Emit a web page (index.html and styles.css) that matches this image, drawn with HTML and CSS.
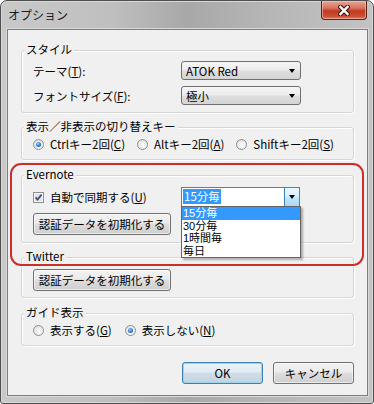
FILE: index.html
```html
<!DOCTYPE html>
<html lang="ja">
  <head>
    <meta charset="UTF-8" />
    <title>オプション</title>
    <link rel="stylesheet" href="styles.css">
  </head>
  <body>
    <div class="window">
      <div class="titlebar">
        <span class="title">オプション</span>
        <span class="close">
          <svg width="12" height="11" viewBox="0 0 12 11">
            <path d="M2.5 2 L9.5 9 M9.5 2 L2.5 9" stroke="#4a1c12" stroke-width="4.6" stroke-linecap="square" fill="none"/>
            <path d="M2.5 2 L9.5 9 M9.5 2 L2.5 9" stroke="#fff" stroke-width="2.4" stroke-linecap="square" fill="none"/>
          </svg>
        </span>
      </div>

      <div class="client">
        <div class="group g-style">
          <div class="group-title">スタイル</div>
          <div class="row">
            <span class="label">テーマ(<u>T</u>):</span>
            <span class="select">ATOK Red<i class="arrow"></i></span>
          </div>
          <div class="row second">
            <span class="label">フォントサイズ(<u>F</u>):</span>
            <span class="select">極小<i class="arrow"></i></span>
          </div>
        </div>

        <div class="group g-keys">
          <div class="group-title">表示／非表示の切り替えキー</div>
          <div class="radios">
            <span class="opt"><i class="radio on"></i>Ctrlキー2回(<u>C</u>)</span>
            <span class="opt"><i class="radio"></i>Altキー2回(<u>A</u>)</span>
            <span class="opt"><i class="radio"></i>Shiftキー2回(<u>S</u>)</span>
          </div>
        </div>

        <div class="group g-evernote">
          <div class="group-title">Evernote</div>
          <div class="row">
            <span class="label check-label">
              <svg class="check" width="11" height="11" viewBox="0 0 11 11">
                <rect x="0.5" y="0.5" width="10" height="10" fill="#f4f4f4" stroke="#8e8f8f"/>
                <rect x="1.5" y="1.5" width="8" height="8" fill="#e2e2e2" stroke="#fff" stroke-width="0.6"/>
                <path d="M2.6 5.4 L4.5 7.6 L8.6 2.6" stroke="#3a4f86" stroke-width="1.7" fill="none"/>
              </svg>
              自動で同期する(<u>U</u>)
            </span>
            <span class="combo">
              <span class="combo-text"><span class="sel">15分毎</span></span>
              <span class="combo-btn"><i class="arrow"></i></span>
              <span class="dropdown">
                <span class="item active">15分毎</span>
                <span class="item">30分毎</span>
                <span class="item">1時間毎</span>
                <span class="item">毎日</span>
              </span>
            </span>
          </div>
          <button class="btn wide">認証データを初期化する</button>
        </div>

        <div class="group g-twitter">
          <div class="group-title">Twitter</div>
          <button class="btn wide">認証データを初期化する</button>
        </div>

        <div class="group g-guide">
          <div class="group-title">ガイド表示</div>
          <div class="radios">
            <span class="opt"><i class="radio"></i>表示する(<u>G</u>)</span>
            <span class="opt"><i class="radio on"></i>表示しない(<u>N</u>)</span>
          </div>
        </div>

        <div class="actions">
          <button class="btn default">OK</button>
          <button class="btn">キャンセル</button>
        </div>

        <div class="callout"></div>
      </div>
    </div>
  </body>
</html>
```

FILE: styles.css
```css
body {
  margin: 0;
  font-family: "Noto Sans CJK JP", "Noto Sans", sans-serif;
  font-size: 11.5px;
  color: #000;
}
.window {
  width: 374px;
  height: 404px;
  box-sizing: border-box;
  border: 1px solid #4f4f4f;
  border-radius: 7px 7px 3px 3px;
  background: linear-gradient(to right, #c9c9c9 0%, #bfbfbf 30%, #a8a8a8 50%, #b6b6b6 72%, #c3c3c3 100%);
  box-shadow: inset 0 0 0 1px #d8d8d8;
  display: flex;
  flex-direction: column;
}
.titlebar {
  height: 28px;
  display: flex;
  align-items: flex-start;
  justify-content: space-between;
  padding-left: 7px;
}
.title {
  font-size: 12px;
  line-height: 14px;
  margin-top: 7px;
  color: #1a1a1a;
}
.close {
  width: 46px;
  height: 19px;
  margin-right: 6px;
  box-sizing: border-box;
  border: 1px solid #5a2419;
  border-top: none;
  border-radius: 0 0 4px 4px;
  background: linear-gradient(#e6a597 0%, #d7715c 40%, #c13a1f 55%, #cc5034 85%, #de7e63 100%);
  box-shadow: inset 0 0 0 1px rgba(255, 210, 200, 0.5);
  display: flex;
  align-items: center;
  justify-content: center;
}
.client {
  position: relative;
  flex: 1;
  margin: 0 5px 7px 6px;
  border: 1px solid #7d7d7d;
  box-shadow: 0 0 0 1px #dadada;
  background: #f0f0f0;
  padding: 20px 13px 0 13px;
}
.group {
  border: 1px solid #d5d5d5;
  border-radius: 3px;
  box-shadow: inset 1px 1px 0 #fff, 1px 1px 0 #fff;
  padding: 0 12px 7px 11px;
}
.group-title {
  width: fit-content;
  line-height: 14px;
  height: 14px;
  margin: -9px 0 0 -9px;
  padding: 0 2px;
  background: #f0f0f0;
}
.row {
  display: flex;
  align-items: center;
  height: 19px;
}
.label {
  width: 148px;
  line-height: 14px;
}

/* スタイル */
.g-style .group-title { margin-bottom: 5px; }
.g-style .second { margin-top: 6px; }
.select {
  width: 120px;
  height: 19px;
  box-sizing: border-box;
  border: 1px solid #707070;
  border-radius: 3px;
  background: linear-gradient(#f5f5f5 0%, #ececec 45%, #dedede 55%, #d4d4d4 100%);
  padding: 0 5px 0 4px;
  display: flex;
  align-items: center;
  justify-content: space-between;
  line-height: 14px;
}
.arrow {
  width: 0;
  height: 0;
  border-left: 3.5px solid transparent;
  border-right: 3.5px solid transparent;
  border-top: 4px solid #000;
}

/* radios */
.g-keys { margin-top: 14px; padding-bottom: 8px; }
.g-keys .group-title { margin-bottom: 4px; }
.radios {
  display: flex;
  gap: 12px;
  line-height: 14px;
  height: 14px;
}
.g-guide .radios { gap: 13px; }
.opt {
  display: flex;
  align-items: center;
}
.radio {
  width: 11px;
  height: 11px;
  box-sizing: border-box;
  border: 1px solid #8e8f8f;
  border-radius: 50%;
  background: radial-gradient(circle at 60% 65%, #fdfdfd 0%, #e9e9e9 60%, #d2d2d2 100%);
  margin-right: 6px;
  display: flex;
  align-items: center;
  justify-content: center;
}
.radio.on::after {
  content: "";
  width: 5px;
  height: 5px;
  border-radius: 50%;
  background: radial-gradient(circle at 40% 35%, #9fd3ff 0%, #2a7fd6 50%, #1a4d99 100%);
}

/* Evernote */
.g-evernote { margin-top: 15px; }
.g-evernote .group-title { margin-bottom: 6px; }
.g-evernote .row { height: 20px; }
.check-label {
  display: flex;
  align-items: center;
}
.check { margin-right: 6px; }
.combo {
  position: relative;
  width: 119px;
  height: 20px;
  box-sizing: border-box;
  border: 1px solid #5a7fa6;
  background: #fff;
  display: flex;
}
.combo-text {
  flex: 1;
  padding: 1px 0 0 1px;
  line-height: 15px;
}
.sel {
  display: inline-block;
  background: #3399ff;
  color: #fff;
  padding: 0 1px;
}
.combo-btn {
  width: 15px;
  box-sizing: border-box;
  border-left: 1px solid #3c7fb1;
  background: linear-gradient(#eaf6fd 0%, #d9f0fc 45%, #bee6fd 55%, #a7d9f5 100%);
  display: flex;
  align-items: center;
  justify-content: center;
}
.dropdown {
  position: absolute;
  top: 18px;
  left: -1px;
  width: 120px;
  box-sizing: border-box;
  border: 1px solid #646464;
  background: #fff;
  box-shadow: 2px 2px 2px rgba(0, 0, 0, 0.3);
  display: flex;
  flex-direction: column;
  z-index: 2;
}
.item {
  font-family: "Liberation Sans", "Noto Sans CJK JP", sans-serif;
  font-size: 11px;
  line-height: 12.5px;
  height: 12.5px;
  padding-left: 1px;
}
.item.active {
  background: #3399ff;
  color: #fff;
}
.btn {
  height: 22px;
  box-sizing: border-box;
  border: 1px solid #707070;
  border-radius: 3px;
  background: linear-gradient(#f2f2f2 0%, #ebebeb 45%, #dddddd 50%, #cfcfcf 100%);
  box-shadow: inset 0 0 0 1px rgba(255, 255, 255, 0.6);
  font: inherit;
  color: #000;
  padding: 0;
  display: block;
}
.wide {
  width: 138px;
  margin-top: 6px;
}

/* Twitter */
.g-twitter { margin-top: 14px; padding-bottom: 6px; }
.g-twitter .group-title { margin-bottom: 0; }

/* ガイド表示 */
.g-guide { margin-top: 15px; padding-bottom: 8px; }
.g-guide .group-title { margin-bottom: 4px; }

.actions {
  display: flex;
  justify-content: flex-end;
  gap: 10px;
  margin-top: 16px;
}
.actions .btn { width: 81px; }
.btn.default {
  border-color: #3c7fb1;
  background: linear-gradient(#eaf2f7 0%, #e1ebf2 45%, #d0dde7 50%, #c4d3df 100%);
  box-shadow: inset 0 0 0 1px #9ed2ee;
}

.callout {
  position: absolute;
  left: 2px;
  top: 133px;
  width: 354px;
  height: 103px;
  box-sizing: border-box;
  border: 2px solid #c9302c;
  border-radius: 11px;
  pointer-events: none;
}
```
